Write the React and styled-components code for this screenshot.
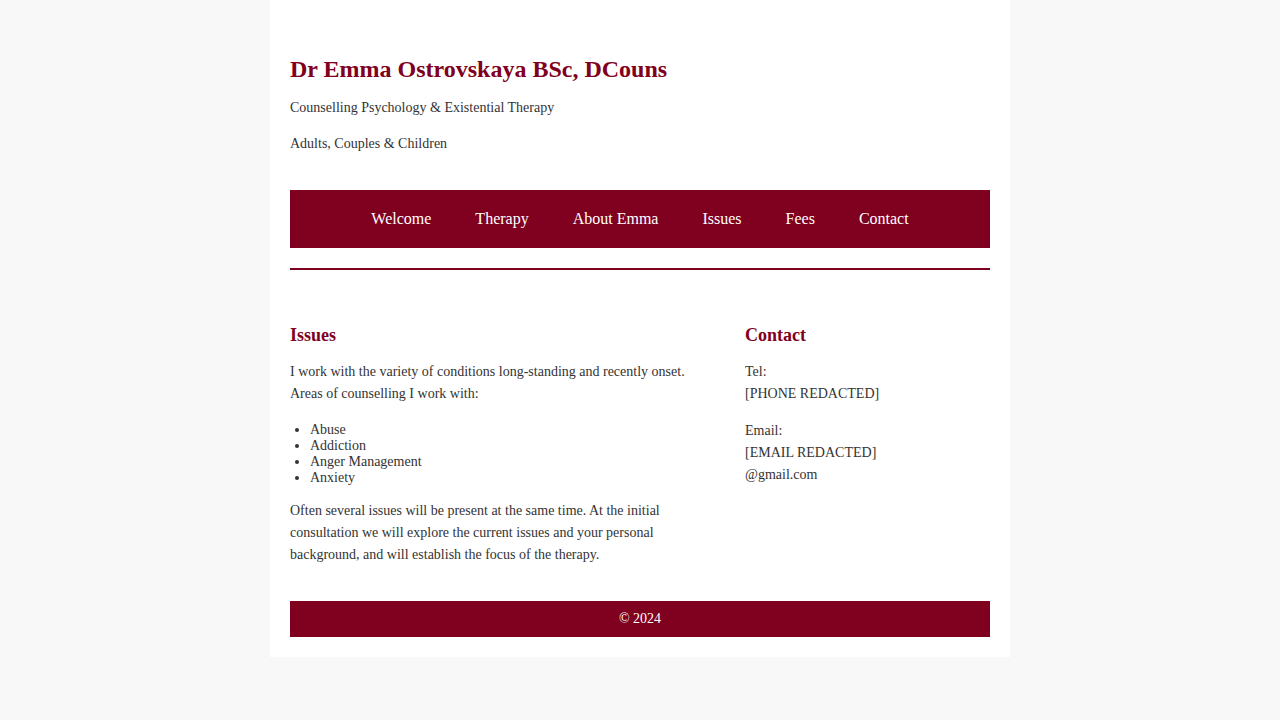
import React from "react";
import styled, { createGlobalStyle } from "styled-components";

const GlobalStyle = createGlobalStyle`
  *, *::before, *::after { box-sizing: border-box; }
  body {
    margin: 0;
    background: #f8f8f8;
    color: #333;
    font-family: "Liberation Serif", "Times New Roman", serif;
    font-size: 14px;
    line-height: 16px;
  }
`;

const Page = styled.div`
  max-width: 740px;
  margin: 0 auto;
  padding: 20px;
  background: #fff;
`;

const Title = styled.h1`
  margin: 0 0 11px;
  color: #800020;
  font-size: 24px;
  line-height: 34px;
`;

const Paragraph = styled.p`
  margin: 0 0 15px;
  line-height: 22px;

  &:last-child { margin-bottom: 0; }
`;

const Header = styled.header`
  padding: 32px 0 35px;

  ${Paragraph} + ${Paragraph} { margin-top: 0; }
  ${Paragraph}:not(:last-child) { margin-bottom: 14px; }
`;

const Nav = styled.nav`
  padding: 20px;
  background: #800020;
`;

const NavList = styled.ul`
  display: flex;
  flex-wrap: wrap;
  justify-content: center;
  gap: 44px;
  margin: 0;
  padding: 0;
  list-style: none;
`;

const NavLink = styled.a`
  display: block;
  color: #fff;
  font-size: 16px;
  line-height: 18px;
  text-decoration: none;
`;

const Divider = styled.hr`
  height: 2px;
  margin: 20px 0;
  border: 0;
  background: #800020;
`;

const Columns = styled.div`
  display: grid;
  grid-template-columns: 13fr 7fr;
  padding: 32px 0 15px;
`;

const Main = styled.main`
  padding-right: 35px;
`;

const Aside = styled.aside`
  min-width: 0;
`;

const Heading = styled.h2`
  margin: 0 0 13px;
  color: #800020;
  font-size: 18px;
  line-height: 26px;
`;

const List = styled.ul`
  margin: 17px 0 14px;
  padding-left: 20px;
`;

const Footer = styled.footer`
  margin-top: 20px;
  padding: 10px;
  background: #800020;
  color: #fff;
  text-align: center;
`;

const links = ["Welcome", "Therapy", "About Emma", "Issues", "Fees", "Contact"];
const issues = ["Abuse", "Addiction", "Anger Management", "Anxiety"];

export default function App() {
  return (
    <>
      <GlobalStyle />
      <Page>
        <Header>
          <Title>Dr Emma Ostrovskaya BSc, DCouns</Title>
          <Paragraph>Counselling Psychology &amp; Existential Therapy</Paragraph>
          <Paragraph>Adults, Couples &amp; Children</Paragraph>
        </Header>
        <Nav>
          <NavList>
            {links.map((label) => (
              <li key={label}>
                <NavLink href={"#" + label.toLowerCase().replace(" ", "-")}>{label}</NavLink>
              </li>
            ))}
          </NavList>
        </Nav>
        <Divider />
        <Columns>
          <Main id="issues">
            <Heading>Issues</Heading>
            <Paragraph>
              I work with the variety of conditions long-standing and recently onset. Areas of
              counselling I work with:
            </Paragraph>
            <List>
              {issues.map((issue) => (
                <li key={issue}>{issue}</li>
              ))}
            </List>
            <Paragraph>
              Often several issues will be present at the same time. At the initial consultation we
              will explore the current issues and your personal background, and will establish the
              focus of the therapy.
            </Paragraph>
          </Main>
          <Aside id="contact">
            <Heading>Contact</Heading>
            <Paragraph>
              Tel:
              <br />
              [PHONE REDACTED]
            </Paragraph>
            <Paragraph>
              Email:
              <br />
              [EMAIL REDACTED]
              <br />
              @gmail.com
            </Paragraph>
          </Aside>
        </Columns>
        <Footer>© 2024</Footer>
      </Page>
    </>
  );
}
